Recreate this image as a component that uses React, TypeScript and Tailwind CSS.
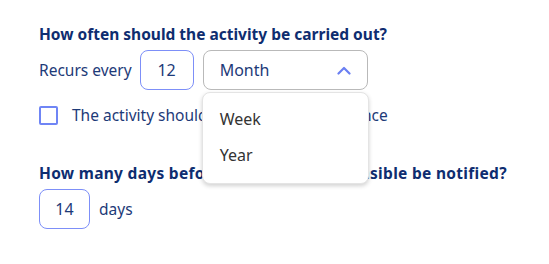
import { useState } from 'react';

const options = ['Week', 'Year'];

const App = () => {
  const [value, setValue] = useState('Month');
  const [open, setOpen] = useState(true);
  const [once, setOnce] = useState(false);

  return (
    <div
      className="min-h-screen bg-white pt-[24px] pl-[39px] text-[#1d3a78]"
      style={{ fontFamily: '"Noto Sans", "Open Sans", sans-serif' }}
    >
      <h2 className="text-[15.5px] font-bold leading-[20px] text-[#0e2d70]">
        How often should the activity be carried out?
      </h2>

      {/* Recurrence */}
      <div className="mt-[6px] flex items-center">
        <span className="text-[15.5px] leading-[24px]">Recurs every</span>
        <div className="ml-[8px] flex h-[40px] w-[54px] items-center justify-center rounded-[8px] border border-[#7d8ff8] text-[16px]">
          12
        </div>
        <div className="relative ml-[9px]">
          <button
            className="flex h-[40px] w-[165px] items-center justify-between rounded-[8px] border border-[#b9b9b9] pl-[16px] pr-[16px] text-[16px]"
            onClick={() => setOpen(!open)}
          >
            <span>{value}</span>
            <svg width="14" height="9" viewBox="0 0 14 9" fill="none" className={open ? '' : 'rotate-180'}>
              <path d="M1.5 7.5L7 2l5.5 5.5" stroke="#6a7ff2" strokeWidth="2.2" strokeLinecap="round" strokeLinejoin="round" />
            </svg>
          </button>
          {open && (
            <div className="absolute left-[-1px] top-[42px] z-10 w-[167px] rounded-[8px] border border-[#e4e4e4] bg-white pt-[8px] pb-[10px] shadow-[0_2px_4px_rgba(0,0,0,0.18)]">
              {options.map((o) => (
                <div
                  key={o}
                  className="flex h-[36px] cursor-pointer items-center pl-[17px] text-[16px] text-[#333]"
                  onClick={() => {
                    setValue(o);
                    setOpen(false);
                  }}
                >
                  {o}
                </div>
              ))}
            </div>
          )}
        </div>
      </div>

      <label className="mt-[13px] flex items-center gap-[14px]">
        <input type="checkbox" className="hidden" checked={once} onChange={() => setOnce(!once)} />
        <span className="h-[19px] w-[19px] rounded-[2px] border-2 border-[#6f85f5]" />
        <span className="text-[15.5px] leading-[24px]">The activity should only be carried out once</span>
      </label>

      <h2 className="mt-[36px] text-[15.5px] font-bold leading-[20px] tracking-[0.3px] text-[#0e2d70]">
        How many days before should the responsible be notified?
      </h2>

      <div className="mt-[6px] flex items-center">
        <div className="flex h-[40px] w-[51px] items-center justify-center rounded-[8px] border border-[#7d8ff8] text-[16px]">
          14
        </div>
        <span className="ml-[9px] text-[15.5px] leading-[24px]">days</span>
      </div>
    </div>
  );
};

export default App;
